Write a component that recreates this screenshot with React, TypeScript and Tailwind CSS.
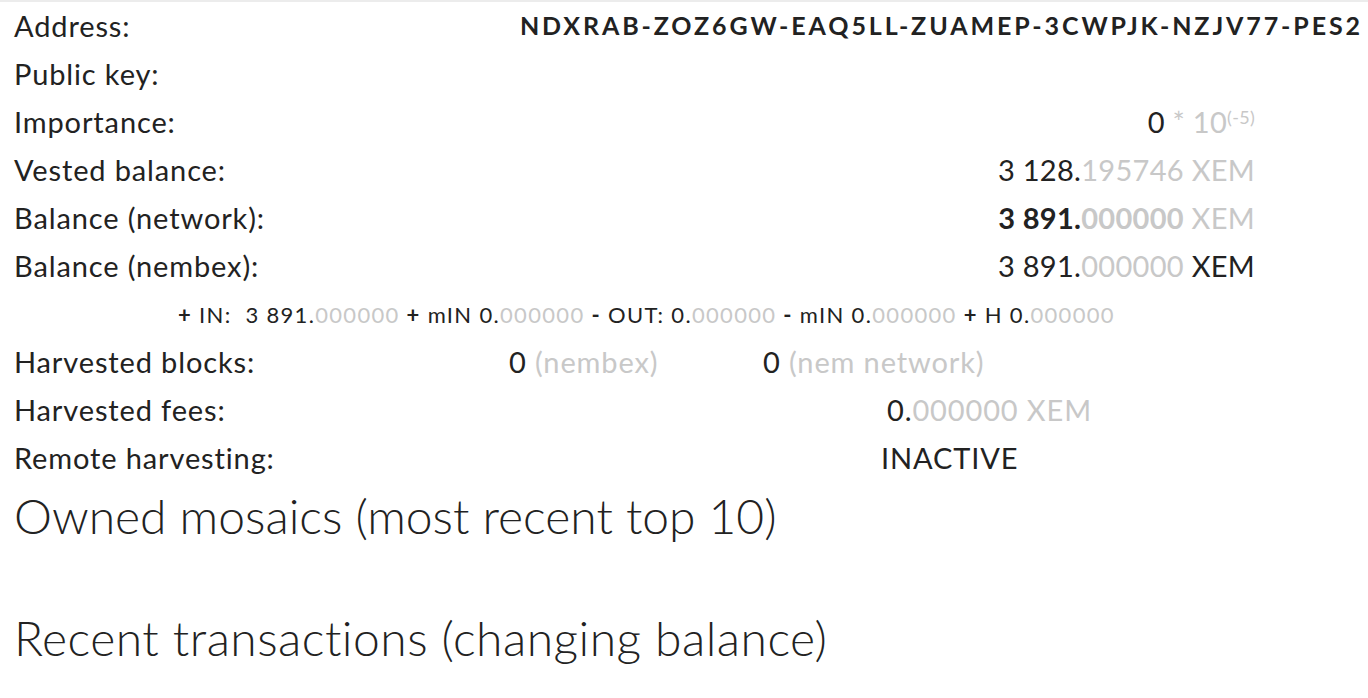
const dim = "text-[#c8c8c8]";

function Row({ label, children }: { label: string; children?: React.ReactNode }) {
  return (
    <div className="flex h-[48px] items-center">
      <div className="w-[495px] shrink-0">{label}</div>
      <div className="flex-1 min-w-0">{children}</div>
    </div>
  );
}

function Amount({ whole, frac, unit, unitDark }: { whole: string; frac: string; unit?: string; unitDark?: boolean }) {
  return (
    <span>
      {whole}.<span className={dim}>{frac}</span>
      {unit && <span className={unitDark ? "" : dim}> {unit}</span>}
    </span>
  );
}

export default function App() {
  return (
    <div className="min-h-screen bg-white text-[#222] font-['Lato','Open_Sans',sans-serif]">
      <div className="h-[2px] bg-[#ececec]" />
      <div className="pl-[14px] pr-[8px] text-[29px] tracking-[0.03em]">
        <Row label="Address:">
          <div className="text-right font-bold text-[25px] tracking-[2.9px] mr-[-3px]">
            NDXRAB-ZOZ6GW-EAQ5LL-ZUAMEP-3CWPJK-NZJV77-PES2
          </div>
        </Row>
        <Row label="Public key:" />
        <Row label="Importance:">
          <div className="pr-[105px] text-right tracking-[0.01em]">
            0 <span className={dim}>* 10<sup className="text-[18px]">(-5)</sup></span>
          </div>
        </Row>
        <Row label="Vested balance:">
          <div className="pr-[105px] text-right tracking-[0.01em]">
            <Amount whole="3 128" frac="195746" unit="XEM" />
          </div>
        </Row>
        <Row label="Balance (network):">
          <div className="pr-[105px] text-right tracking-[0.01em]">
            <span className="font-bold">
              3 891.<span className={dim}>000000</span>
            </span>
            <span className={dim}> XEM</span>
          </div>
        </Row>
        <Row label="Balance (nembex):">
          <div className="pr-[105px] text-right tracking-[0.01em]">
            <Amount whole="3 891" frac="000000" unit="XEM" unitDark />
          </div>
        </Row>

        <div className="flex h-[48px] items-center pl-[164px] text-[22px] tracking-[0.06em]">
          <span>
            <b>+</b> IN:&nbsp; <Amount whole="3 891" frac="000000" /> <b>+</b> mIN{" "}
            <Amount whole="0" frac="000000" /> <b>-</b> OUT: <Amount whole="0" frac="000000" />{" "}
            <b>-</b> mIN <Amount whole="0" frac="000000" /> <b>+</b> H{" "}
            <Amount whole="0" frac="000000" />
          </span>
        </div>

        <Row label="Harvested blocks:">
          <div className="flex">
            <div className="w-[254px]">
              0 <span className={dim}>(nembex)</span>
            </div>
            <div>
              0 <span className={dim}>(nem network)</span>
            </div>
          </div>
        </Row>
        <Row label="Harvested fees:">
          <div className="pl-[378px]">
            <Amount whole="0" frac="000000" unit="XEM" />
          </div>
        </Row>
        <Row label="Remote harvesting:">
          <div className="pl-[372px]">INACTIVE</div>
        </Row>

        <h2 className="mt-[6px] text-[48px] font-light leading-[56px] tracking-normal">
          Owned mosaics (most recent top 10)
        </h2>
        <h2 className="mt-[66px] text-[48px] font-light leading-[56px] tracking-[0.01em]">
          Recent transactions (changing balance)
        </h2>
      </div>
    </div>
  );
}
